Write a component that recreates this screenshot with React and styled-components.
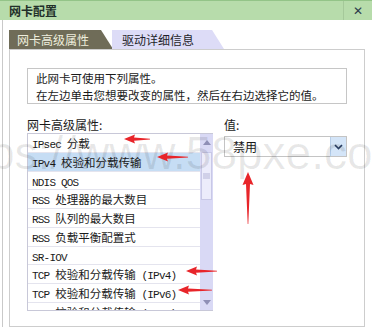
import React from 'react'
import styled, { createGlobalStyle } from 'styled-components'

const GlobalStyle = createGlobalStyle`
    html, body{
        margin: 0;
        padding: 0;
        background: #fff;
    }
    body{
        font-family: "Noto Sans CJK SC", "Liberation Sans", sans-serif;
        color: #1a1a1a;
    }
`

const Dialog = styled.div`
    position: relative;
    width: 372px;
    height: 327px;
    overflow: hidden;
    background: #fff;
`

const TitleBar = styled.div`
    display: flex;
    align-items: center;
    height: 19px;
    background: #b7dcab;
    border-top: 1px solid #93c488;
    .title{
        flex: 1;
        padding-left: 9px;
        font-size: 12px;
        font-weight: 700;
        color: #22302a;
        line-height: 19px;
    }
    .close{
        width: 28px;
        height: 19px;
        border-left: 1px solid #a5c99a;
        display: flex;
        align-items: center;
        justify-content: center;
        font-family: "DejaVu Sans", sans-serif;
        font-weight: 700;
        font-size: 12px;
        color: #2c3c4c;
    }
`

const Body = styled.div`
    margin-left: 2px;
    border-left: 1px solid #c9c9c9;
    padding: 10px 7px 0 6px;
    height: 307px;
    box-sizing: border-box;
`

const Tabs = styled.div`
    display: flex;
    height: 19px;
`

const Tab = styled.div`
    position: relative;
    height: 19px;
    line-height: 19px;
    font-size: 12px;
    padding: 0 ${p => (p.$active ? '24px' : '30px')} 0 ${p => (p.$active ? '8px' : '10px')};
    color: ${p => (p.$active ? '#eeeedd' : '#1f1f2a')};
    background: ${p => (p.$active ? '#6f6c58' : '#dddcf7')};
    clip-path: polygon(0 0, calc(100% - 12px) 0, 100% 100%, 0 100%);
    margin-right: ${p => (p.$active ? '-1px' : '0')};
`

const Panel = styled.div`
    border: 1px solid #cdcdcd;
    height: 278px;
    box-sizing: border-box;
    padding: 18px 17px 0 17px;
`

const InfoBox = styled.div`
    border: 1px solid #c6c6c6;
    height: 36px;
    box-sizing: border-box;
    padding: 1px 0 0 8px;
    font-size: 11.5px;
    line-height: 16.5px;
    color: #1a1a1a;
`

const Columns = styled.div`
    display: flex;
    gap: 11px;
    margin-top: 13px;
`

const Label = styled.div`
    height: 16px;
    line-height: 16px;
    font-size: 12px;
    color: #1a1a1a;
`

const LeftCol = styled.div`
    width: 186px;
`

const RightCol = styled.div`
    flex: 1;
`

const ListBox = styled.div`
    display: flex;
    height: 178px;
    border: 1px solid #c8c8d8;
    border-right: none;
    box-sizing: border-box;
    overflow: hidden;
`

const Rows = styled.div`
    flex: 1;
`

const Row = styled.div`
    height: 18.75px;
    line-height: 18px;
    box-sizing: border-box;
    padding-left: 4px;
    border-bottom: 1px solid #e4e4ee;
    font-size: 11.5px;
    white-space: nowrap;
    background: ${p => (p.$selected ? '#c6ddf4' : '#fff')};
    color: #1a1a1a;
`

const Latin = styled.span`
    font-family: "Liberation Mono", monospace;
    font-size: 11px;
    letter-spacing: -0.8px;
`

const ScrollBar = styled.div`
    width: 13px;
    background: #d9d9f5;
    display: flex;
    flex-direction: column;
    align-items: center;
    .arrow{
        height: 16px;
        display: flex;
        align-items: center;
        justify-content: center;
    }
    .track{
        flex: 1;
        width: 100%;
    }
    .thumb{
        margin: 2px 1px 0;
        height: 46px;
        background: #ececfb;
        border: 1px solid #c8c8e6;
        display: flex;
        align-items: center;
        justify-content: center;
    }
`

const Select = styled.div`
    margin-top: 3px;
    height: 21px;
    border: 1px solid #c4c4c4;
    box-sizing: border-box;
    display: flex;
    align-items: stretch;
    .value{
        flex: 1;
        padding-left: 8px;
        line-height: 19px;
        font-size: 12px;
    }
    .btn{
        width: 15px;
        background: #d4e5f8;
        border-left: 1px solid #b9cfe9;
        display: flex;
        align-items: center;
        justify-content: center;
    }
`

const Watermark = styled.div`
    position: absolute;
    left: -11px;
    top: 130px;
    font-family: "Liberation Sans", sans-serif;
    font-size: 46px;
    line-height: 46px;
    color: rgba(0, 0, 0, 0.09);
    white-space: nowrap;
    pointer-events: none;
`

const Marks = styled.svg`
    position: absolute;
    left: 0;
    top: 0;
    pointer-events: none;
`

const mixed = text =>
    text.split(/([\x20-\x7e]+)/).filter(Boolean).map((part, i) =>
        /^[\x20-\x7e]+$/.test(part) ? <Latin key={i}>{part}</Latin> : <span key={i}>{part}</span>
    )

const items = [
    'IPsec 分载',
    'IPv4 校验和分载传输',
    'NDIS QOS',
    'RSS 处理器的最大数目',
    'RSS 队列的最大数目',
    'RSS 负载平衡配置式',
    'SR-IOV',
    'TCP 校验和分载传输 (IPv4)',
    'TCP 校验和分载传输 (IPv6)',
    'UDP 校验和分载传输 (IPv4)',
]

// left-pointing arrow with tip at (x, y)
const leftArrow = (x, y, len) =>
    `${x},${y} ${x + 11},${y - 4.5} ${x + 10},${y - 1.6} ${x + len},${y - 0.2} ${x + len},${y + 0.4} ${x + 10},${y + 1.8} ${x + 11},${y + 4.5}`

const upArrow = (x, y, len) =>
    `${x},${y} ${x + 5.5},${y + 13} ${x + 2},${y + 12} ${x + 0.3},${y + len} ${x - 0.3},${y + len} ${x - 2},${y + 12} ${x - 5.5},${y + 13}`

const App = () => {
    return (
        <>
            <GlobalStyle />
            <Dialog>
                <TitleBar>
                    <div className="title">网卡配置</div>
                    <div className="close">✕</div>
                </TitleBar>
                <Body>
                    <Tabs>
                        <Tab $active>网卡高级属性</Tab>
                        <Tab>驱动详细信息</Tab>
                    </Tabs>
                    <Panel>
                        <InfoBox>
                            <div>此网卡可使用下列属性。</div>
                            <div>在左边单击您想要改变的属性，然后在右边选择它的值。</div>
                        </InfoBox>
                        <Columns>
                            <LeftCol>
                                <Label>网卡高级属性:</Label>
                                <ListBox>
                                    <Rows>
                                        {items.map((t, i) => (
                                            <Row key={t} $selected={i === 1}>{mixed(t)}</Row>
                                        ))}
                                    </Rows>
                                    <ScrollBar>
                                        <div className="arrow">
                                            <svg width="8" height="5" viewBox="0 0 8 5"><path d="M4 0 L8 5 L0 5 Z" fill="#8f8fb6" /></svg>
                                        </div>
                                        <div className="track">
                                            <div className="thumb">
                                                <svg width="7" height="6" viewBox="0 0 7 6">
                                                    <path d="M0 1h7M0 3h7M0 5h7" stroke="#b5b5d6" strokeWidth="1" />
                                                </svg>
                                            </div>
                                        </div>
                                        <div className="arrow">
                                            <svg width="8" height="5" viewBox="0 0 8 5"><path d="M0 0 L8 0 L4 5 Z" fill="#8f8fb6" /></svg>
                                        </div>
                                    </ScrollBar>
                                </ListBox>
                            </LeftCol>
                            <RightCol>
                                <Label>值:</Label>
                                <Select>
                                    <div className="value">禁用</div>
                                    <div className="btn">
                                        <svg width="9" height="6" viewBox="0 0 9 6">
                                            <path d="M1 1 L4.5 4.5 L8 1" fill="none" stroke="#2a3f66" strokeWidth="1.6" />
                                        </svg>
                                    </div>
                                </Select>
                            </RightCol>
                        </Columns>
                    </Panel>
                </Body>
                <Watermark>ps://www.58pxe.com</Watermark>
                <Marks width="372" height="327" viewBox="0 0 372 327">
                    <g fill="#e8252a">
                        <polygon points={leftArrow(124, 139, 26)} />
                        <polygon points={leftArrow(157, 157, 31)} />
                        <polygon points={upArrow(248, 172, 52)} />
                        <polygon points={leftArrow(186, 271, 31)} />
                        <polygon points={leftArrow(178, 290, 34)} />
                    </g>
                </Marks>
            </Dialog>
        </>
    )
}

export default App
